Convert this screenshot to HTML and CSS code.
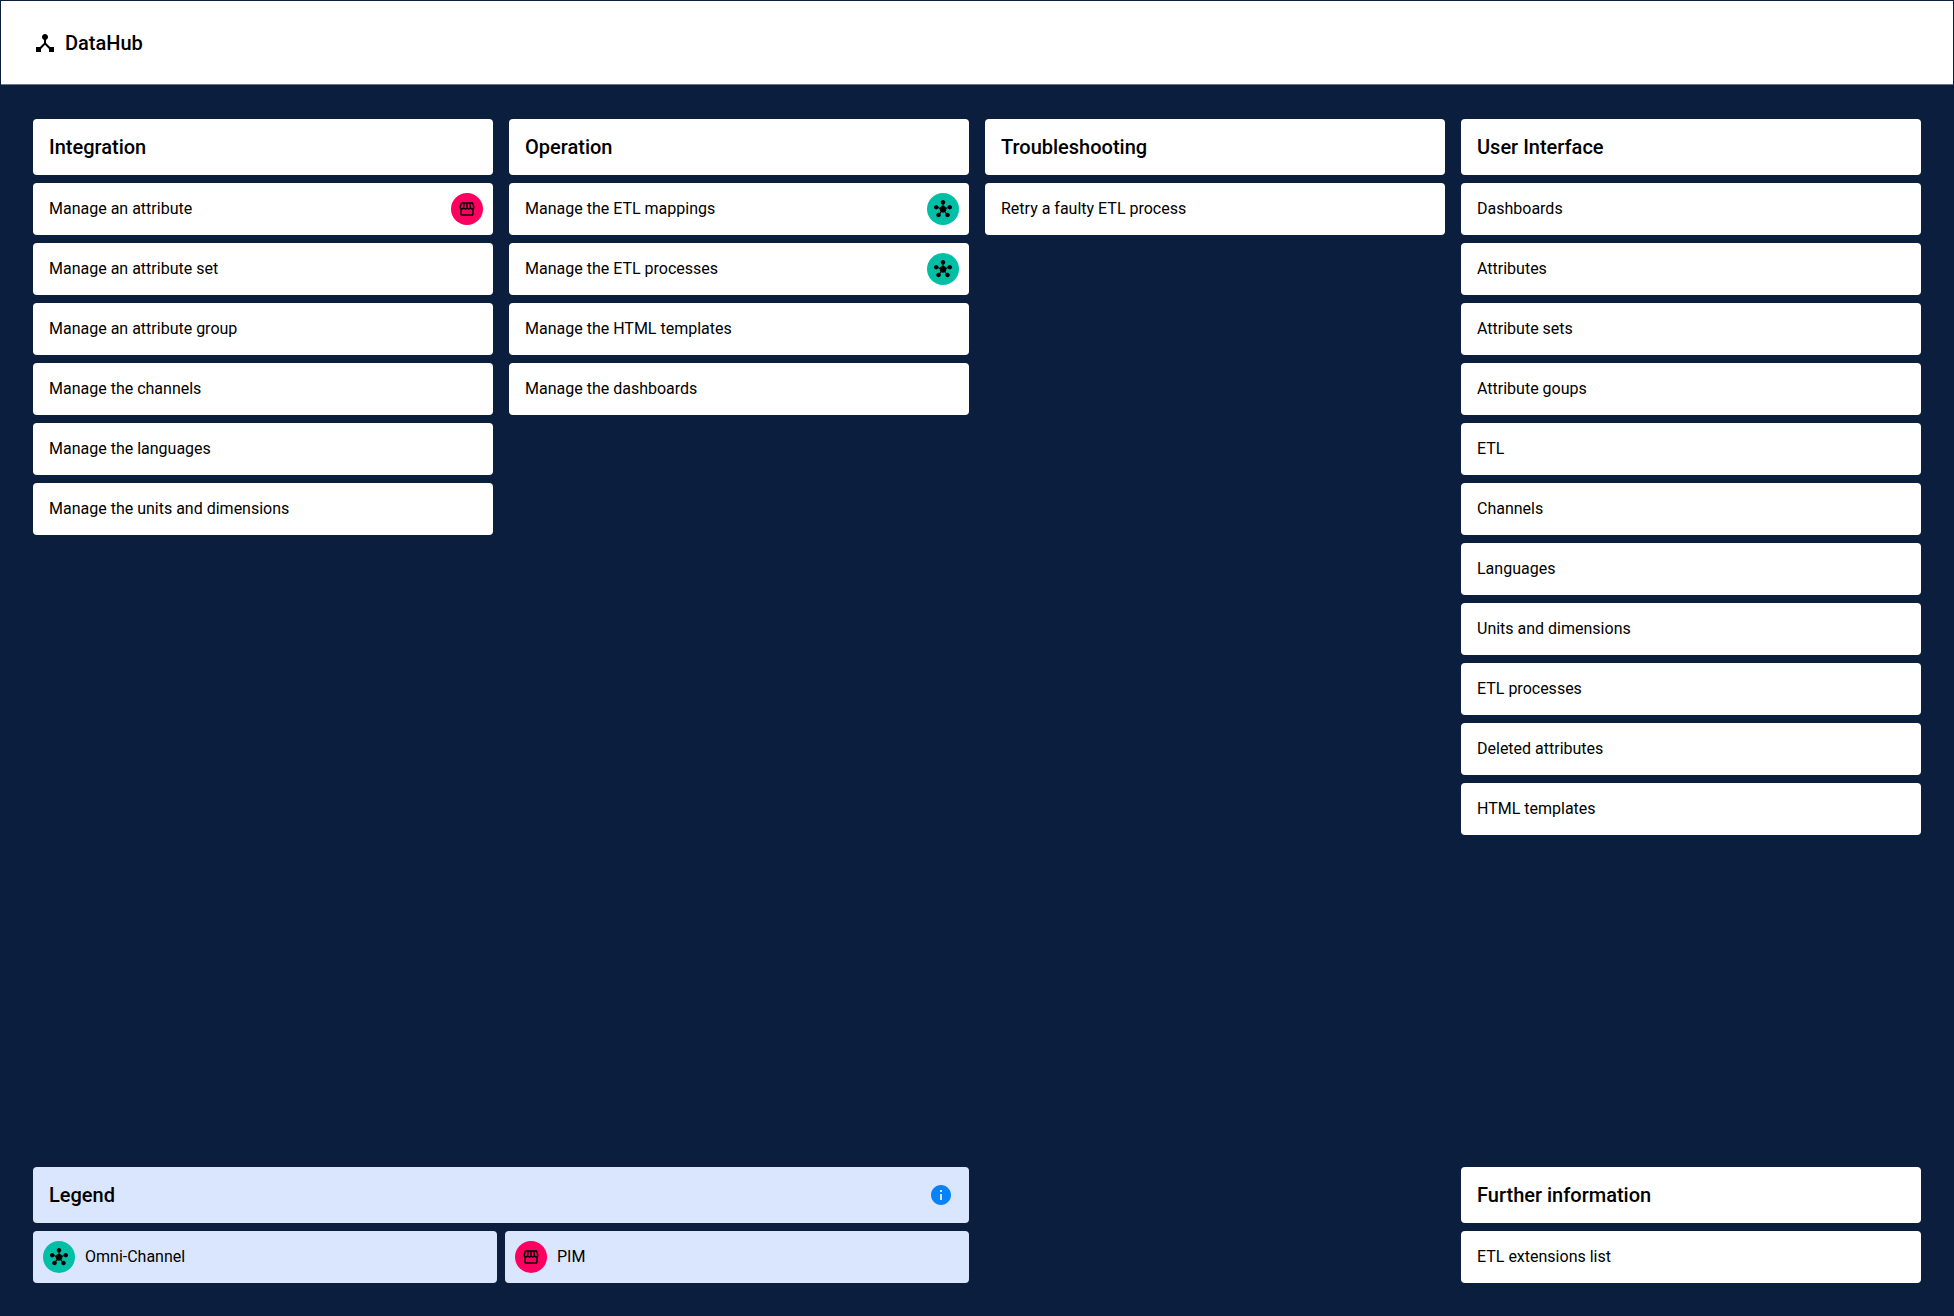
FILE: index.html
```html
<!DOCTYPE html>
<html lang="en">
<head>
<meta charset="utf-8">
<title>DataHub</title>
<link rel="stylesheet" href="styles.css">
</head>
<body>
<svg class="sprite" aria-hidden="true">
  <symbol id="hub" viewBox="0 0 24 24"><path d="M8.4,18.2C8.78,18.7,9,19.32,9,20c0,1.66-1.34,3-3,3s-3-1.34-3-3s1.34-3,3-3c0.44,0,0.85,0.09,1.23,0.26l1.41-1.77c-0.92-1.03-1.29-2.39-1.09-3.69l-2.03-0.68C4.98,11.95,4.06,12.5,3,12.5c-1.66,0-3-1.34-3-3s1.34-3,3-3s3,1.34,3,3c0,0.07,0,0.14-0.01,0.21l2.03,0.68c0.64-1.21,1.82-2.09,3.22-2.32l0-2.16C9.96,5.57,9,4.4,9,3c0-1.66,1.34-3,3-3s3,1.34,3,3c0,1.4-0.96,2.57-2.25,2.91v2.16c1.4,0.23,2.58,1.11,3.22,2.32l2.03-0.68C18,9.64,18,9.57,18,9.5c0-1.66,1.34-3,3-3s3,1.34,3,3s-1.34,3-3,3c-1.06,0-1.98-0.55-2.52-1.37l-2.03,0.68c0.2,1.29-0.16,2.65-1.09,3.69l1.41,1.77C17.15,17.09,17.56,17,18,17c1.66,0,3,1.34,3,3s-1.34,3-3,3s-3-1.34-3-3c0-0.68,0.22-1.3,0.6-1.8l-1.41-1.77c-1.35,0.75-3.01,0.76-4.37,0L8.4,18.2z"/></symbol>
  <symbol id="store" viewBox="0 0 24 24"><path d="M21.9 8.89l-1.05-4.37c-.22-.9-1-1.52-1.91-1.52H5.05c-.9 0-1.69.63-1.9 1.52L2.1 8.89c-.24 1.02-.02 2.06.62 2.88.08.11.19.19.28.29V19c0 1.1.9 2 2 2h14c1.1 0 2-.9 2-2v-6.94c.09-.09.2-.18.28-.28.64-.82.87-1.87.62-2.89zm-2.99-3.9l1.05 4.37c.1.42.01.84-.25 1.17-.14.18-.44.47-.94.47-.61 0-1.14-.49-1.21-1.14L16.98 5l1.93-.01zM13 5h1.96l.54 4.52c.05.39-.07.78-.33 1.07-.22.26-.54.41-.95.41-.67 0-1.22-.59-1.22-1.31V5zM8.49 9.52L9.04 5H11v4.69c0 .72-.55 1.31-1.29 1.31-.34 0-.65-.15-.89-.41-.25-.29-.37-.68-.33-1.07zm-4.45-.16L5.05 5h1.97l-.58 4.86c-.08.65-.6 1.14-1.21 1.14-.49 0-.8-.29-.93-.47-.27-.32-.36-.75-.26-1.17zM5 19v-6.03c.08.01.15.03.23.03.87 0 1.66-.36 2.24-.95.6.6 1.4.95 2.31.95.87 0 1.65-.36 2.23-.93.59.57 1.39.93 2.29.93.84 0 1.64-.35 2.24-.95.58.59 1.37.95 2.24.95.08 0 .15-.02.23-.03V19H5z"/></symbol>
</svg>
<div class="page">
  <header class="header">
    <svg class="icon" viewBox="0 0 24 24"><path d="M17 16l-4-4V8.82C14.16 8.4 15 7.3 15 6c0-1.66-1.34-3-3-3S9 4.34 9 6c0 1.3.84 2.4 2 2.82V12l-4 4H3v5h5v-3.05l4-4.2 4 4.2V21h5v-5h-4z"/></svg>
    <h1 class="brand">DataHub</h1>
  </header>
  <main class="board">
    <section class="column">
      <h2 class="card title">Integration</h2>
      <div class="card">Manage an attribute<span class="badge pim"><svg><use href="#store"/></svg></span></div>
      <div class="card">Manage an attribute set</div>
      <div class="card">Manage an attribute group</div>
      <div class="card">Manage the channels</div>
      <div class="card">Manage the languages</div>
      <div class="card">Manage the units and dimensions</div>
    </section>
    <section class="column">
      <h2 class="card title">Operation</h2>
      <div class="card">Manage the ETL mappings<span class="badge omni"><svg><use href="#hub"/></svg></span></div>
      <div class="card">Manage the ETL processes<span class="badge omni"><svg><use href="#hub"/></svg></span></div>
      <div class="card">Manage the HTML templates</div>
      <div class="card">Manage the dashboards</div>
    </section>
    <section class="column">
      <h2 class="card title">Troubleshooting</h2>
      <div class="card">Retry a faulty ETL process</div>
    </section>
    <section class="column">
      <h2 class="card title">User Interface</h2>
      <div class="card">Dashboards</div>
      <div class="card">Attributes</div>
      <div class="card">Attribute sets</div>
      <div class="card">Attribute goups</div>
      <div class="card">ETL</div>
      <div class="card">Channels</div>
      <div class="card">Languages</div>
      <div class="card">Units and dimensions</div>
      <div class="card">ETL processes</div>
      <div class="card">Deleted attributes</div>
      <div class="card">HTML templates</div>
    </section>
  </main>
  <footer class="board">
    <section class="column legend">
      <h2 class="card title">Legend<svg class="icon info" viewBox="0 0 24 24"><path d="M12 2C6.48 2 2 6.48 2 12s4.48 10 10 10 10-4.48 10-10S17.52 2 12 2zm1 15h-2v-6h2v6zm0-8h-2V7h2v2z"/></svg></h2>
      <div class="legend-items">
        <div class="card"><span class="badge omni"><svg><use href="#hub"/></svg></span>Omni-Channel</div>
        <div class="card"><span class="badge pim"><svg><use href="#store"/></svg></span>PIM</div>
      </div>
    </section>
    <section class="column further">
      <h2 class="card title">Further information</h2>
      <div class="card">ETL extensions list</div>
    </section>
  </footer>
</div>
</body>
</html>
```
FILE: styles.css
```css
* { box-sizing: border-box; }
body {
  margin: 0;
  background: #0b1e3e;
  color: #000;
  font: 400 16px/24px Roboto, sans-serif;
}
.sprite { position: absolute; width: 0; height: 0; }
.page {
  display: flex;
  flex-direction: column;
  height: 1316px;
  padding: 1px 1px 33px;
}
.header {
  display: flex;
  align-items: center;
  gap: 8px;
  height: 84px;
  padding: 0 32px;
  background: #fff;
  border-bottom: 1px solid #6d7588;
}
.icon { width: 24px; height: 24px; flex: none; }
.brand { margin: 0; font-size: 20px; font-weight: 500; }
.board {
  display: grid;
  grid-template-columns: repeat(4, 1fr);
  gap: 16px;
  padding: 34px 32px 0;
}
footer.board { margin-top: auto; padding-top: 0; }
.column { display: flex; flex-direction: column; gap: 8px; }
.card {
  display: flex;
  align-items: center;
  height: 52px;
  margin: 0;
  padding: 0 10px 0 16px;
  border-radius: 4px;
  background: #fff;
}
.title { height: 56px; padding-right: 16px; font-size: 20px; font-weight: 500; }
.badge {
  display: grid;
  place-items: center;
  width: 32px;
  height: 32px;
  margin-left: auto;
  border-radius: 50%;
}
.badge svg { width: 18px; height: 18px; }
.omni { background: #00bfa5; }
.pim { background: #ff0060; }
.legend { grid-column: span 2; }
.legend .card { background: #dae6fd; }
.legend-items { display: grid; grid-template-columns: 1fr 1fr; gap: 8px; }
.legend-items .card { gap: 10px; padding-left: 10px; }
.legend-items .badge { margin-left: 0; }
.info { margin-left: auto; fill: #0882f8; }
.further { grid-column: 4; }
```
